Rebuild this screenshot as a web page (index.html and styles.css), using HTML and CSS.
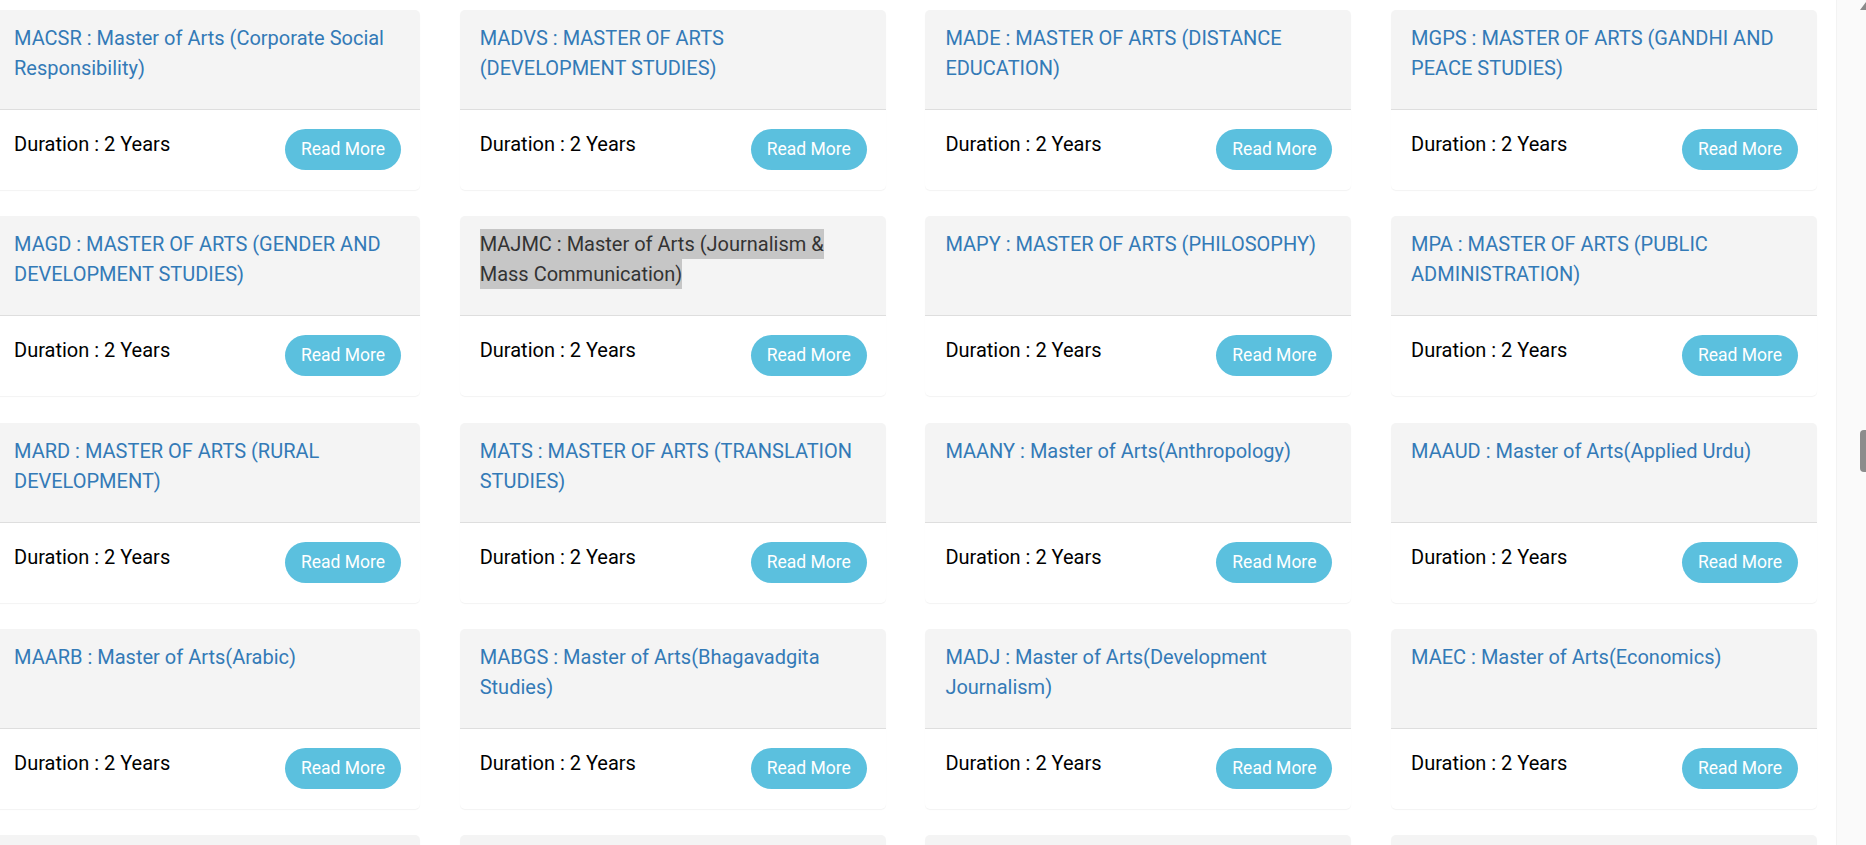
FILE: index.html
```html
<!DOCTYPE html>
<html lang="en">
<head>
  <meta charset="UTF-8" />
  <meta name="viewport" content="width=device-width, initial-scale=1.0"/>
  <title>Programmes</title>
  <link rel="stylesheet" href="styles.css">
</head>
<body>
  <div class="page">
    <div class="courses">

      <div class="course">
        <div class="course-head"><a href="#">MACSR : Master of Arts (Corporate Social Responsibility)</a></div>
        <div class="course-foot"><span>Duration : 2 Years</span><a class="btn" href="#">Read More</a></div>
      </div>
      <div class="course">
        <div class="course-head"><a href="#">MADVS : MASTER OF ARTS (DEVELOPMENT STUDIES)</a></div>
        <div class="course-foot"><span>Duration : 2 Years</span><a class="btn" href="#">Read More</a></div>
      </div>
      <div class="course">
        <div class="course-head"><a href="#">MADE : MASTER OF ARTS (DISTANCE EDUCATION)</a></div>
        <div class="course-foot"><span>Duration : 2 Years</span><a class="btn" href="#">Read More</a></div>
      </div>
      <div class="course">
        <div class="course-head"><a href="#">MGPS : MASTER OF ARTS (GANDHI AND PEACE STUDIES)</a></div>
        <div class="course-foot"><span>Duration : 2 Years</span><a class="btn" href="#">Read More</a></div>
      </div>

      <div class="course">
        <div class="course-head"><a href="#">MAGD : MASTER OF ARTS (GENDER AND DEVELOPMENT STUDIES)</a></div>
        <div class="course-foot"><span>Duration : 2 Years</span><a class="btn" href="#">Read More</a></div>
      </div>
      <div class="course">
        <div class="course-head"><a href="#" class="picked"><span>MAJMC : Master of Arts (Journalism &amp; Mass Communication)</span></a></div>
        <div class="course-foot"><span>Duration : 2 Years</span><a class="btn" href="#">Read More</a></div>
      </div>
      <div class="course">
        <div class="course-head"><a href="#">MAPY : MASTER OF ARTS (PHILOSOPHY)</a></div>
        <div class="course-foot"><span>Duration : 2 Years</span><a class="btn" href="#">Read More</a></div>
      </div>
      <div class="course">
        <div class="course-head"><a href="#">MPA : MASTER OF ARTS (PUBLIC ADMINISTRATION)</a></div>
        <div class="course-foot"><span>Duration : 2 Years</span><a class="btn" href="#">Read More</a></div>
      </div>

      <div class="course">
        <div class="course-head"><a href="#">MARD : MASTER OF ARTS (RURAL DEVELOPMENT)</a></div>
        <div class="course-foot"><span>Duration : 2 Years</span><a class="btn" href="#">Read More</a></div>
      </div>
      <div class="course">
        <div class="course-head"><a href="#">MATS : MASTER OF ARTS (TRANSLATION STUDIES)</a></div>
        <div class="course-foot"><span>Duration : 2 Years</span><a class="btn" href="#">Read More</a></div>
      </div>
      <div class="course">
        <div class="course-head"><a href="#">MAANY : Master of Arts(Anthropology)</a></div>
        <div class="course-foot"><span>Duration : 2 Years</span><a class="btn" href="#">Read More</a></div>
      </div>
      <div class="course">
        <div class="course-head"><a href="#">MAAUD : Master of Arts(Applied Urdu)</a></div>
        <div class="course-foot"><span>Duration : 2 Years</span><a class="btn" href="#">Read More</a></div>
      </div>

      <div class="course">
        <div class="course-head"><a href="#">MAARB : Master of Arts(Arabic)</a></div>
        <div class="course-foot"><span>Duration : 2 Years</span><a class="btn" href="#">Read More</a></div>
      </div>
      <div class="course">
        <div class="course-head"><a href="#">MABGS : Master of Arts(Bhagavadgita Studies)</a></div>
        <div class="course-foot"><span>Duration : 2 Years</span><a class="btn" href="#">Read More</a></div>
      </div>
      <div class="course">
        <div class="course-head"><a href="#">MADJ : Master of Arts(Development Journalism)</a></div>
        <div class="course-foot"><span>Duration : 2 Years</span><a class="btn" href="#">Read More</a></div>
      </div>
      <div class="course">
        <div class="course-head"><a href="#">MAEC : Master of Arts(Economics)</a></div>
        <div class="course-foot"><span>Duration : 2 Years</span><a class="btn" href="#">Read More</a></div>
      </div>

      <!-- next row, only its top edge is in view -->
      <div class="course"><div class="course-head"></div></div>
      <div class="course"><div class="course-head"></div></div>
      <div class="course"><div class="course-head"></div></div>
      <div class="course"><div class="course-head"></div></div>

    </div>

    <div class="scrollbar">
      <div class="arrow"></div>
      <div class="thumb"></div>
    </div>
  </div>
</body>
</html>
```

FILE: styles.css
```css
body {
  font-family: Roboto, 'Liberation Sans', sans-serif;
  margin: 0;
  height: 845px;
  overflow: hidden;
  background: #fff;
}

.page {
  display: flex;
  height: 845px;
  overflow: hidden;
}

.courses {
  flex: 1;
  display: grid;
  grid-template-columns: repeat(4, 426px);
  column-gap: 39.7px;
  row-gap: 26.3px;
  align-content: start;
  padding-top: 10px;
  margin-left: -6px;
}

.course {
  height: 180px;
  background: #fff;
  border-radius: 5px;
  box-shadow: 0 1px 1px rgba(0,0,0,0.05);
  overflow: hidden;
}

.course-head {
  height: 86px;
  padding: 13px 20px 0;
  background: #f4f4f4;
  border-bottom: 1px solid #dedede;
  font-size: 20px;
  line-height: 30px;
}

.course-head a {
  color: #337ab7;
  text-decoration: none;
}

.course-head .picked {
  color: #333;
}

.course-head .picked span {
  background: #c6c6c6;
  padding: 3px 0;
  -webkit-box-decoration-break: clone;
  box-decoration-break: clone;
}

.course-foot {
  display: flex;
  justify-content: space-between;
  align-items: flex-start;
  padding: 19px 19px 0 20px;
  font-size: 20px;
  line-height: 30px;
  color: #000;
}

.btn {
  display: block;
  width: 116px;
  height: 41px;
  line-height: 41px;
  text-align: center;
  background: #5bc0de;
  color: #fff;
  font-size: 17.5px;
  border-radius: 21px;
  text-decoration: none;
}

.scrollbar {
  width: 29px;
  flex-shrink: 0;
  background: #fafafa;
  border-left: 1px solid #f3f3f3;
  display: flex;
  flex-direction: column;
  align-items: flex-end;
}

.arrow {
  width: 0;
  height: 0;
  border-left: 6px solid transparent;
  border-bottom: 8px solid #8a8a8a;
  margin-top: 2px;
}

.thumb {
  width: 6px;
  height: 42px;
  margin-top: 420px;
  background: #8c8c8c;
  border-radius: 4px 0 0 4px;
}
```
